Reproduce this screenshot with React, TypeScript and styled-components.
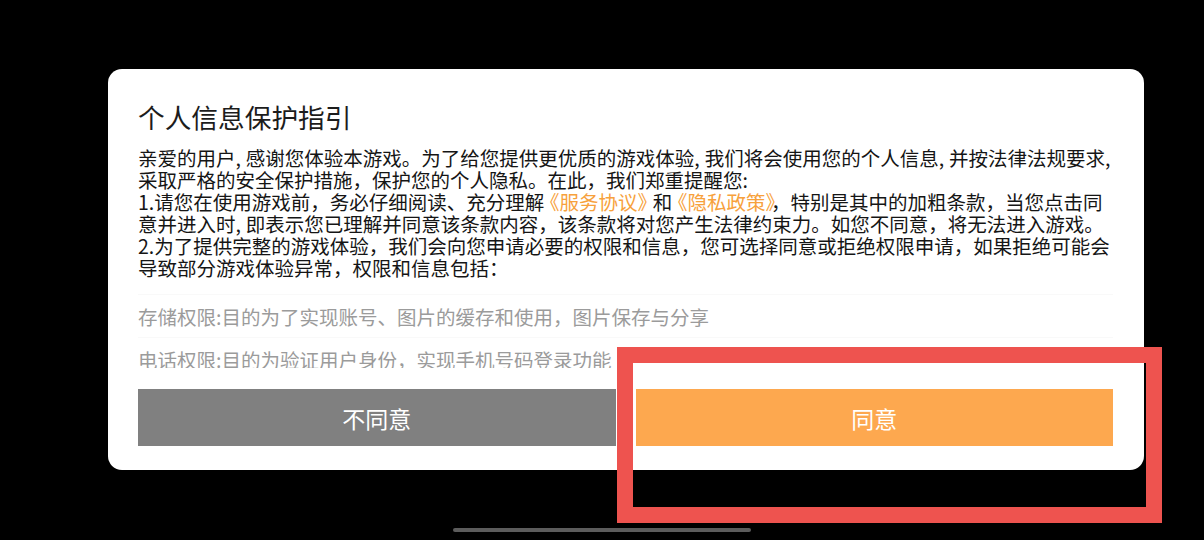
import React from 'react';
import styled, { createGlobalStyle } from 'styled-components';

const GlobalStyle = createGlobalStyle`
  html, body {
    margin: 0;
    padding: 0;
    background: #000;
  }
  body {
    font-family: "Noto Sans CJK SC", "Noto Sans", sans-serif;
  }
`;

const Screen = styled.div`
  position: relative;
  width: 1204px;
  height: 540px;
  background: #000;
  overflow: hidden;
  padding: 69px 0 0 108px;
  box-sizing: border-box;
`;

const Dialog = styled.div`
  width: 1036px;
  height: 401px;
  box-sizing: border-box;
  background: #fff;
  border-radius: 14px;
  padding: 31px 31px 24px 30px;
  display: flex;
  flex-direction: column;
`;

const Title = styled.h1`
  margin: 0;
  font-size: 26.7px;
  line-height: 34px;
  font-weight: 400;
  color: #1c1c1c;
`;

const Scroller = styled.div`
  margin-top: 13px;
  height: 221px;
  overflow: hidden;
`;

const Body = styled.div`
  font-size: 19.5px;
  line-height: 22px;
  color: #151515;
`;

const Line = styled.div`
  white-space: nowrap;
`;

const Link = styled.span`
  color: #f7a13c;
`;

// book-title brackets sit tighter than a full em in the source
const Bracket = styled.span<{ $side: 'l' | 'r' }>`
  margin-left: ${(p) => (p.$side === 'l' ? '-0.22em' : '0')};
  margin-right: ${(p) => (p.$side === 'r' ? '-0.22em' : '0')};
`;

// the half-width commas in the source carry a wide gap after them
const Comma = styled.span`
  margin-right: 0.25em;
`;

const PermissionList = styled.ul`
  list-style: none;
  margin: 15px 0 0;
  padding: 0;
`;

const PermissionItem = styled.li`
  height: 42px;
  display: flex;
  align-items: center;
  font-size: 19.5px;
  color: #9b9b9b;
  white-space: nowrap;
  border-top: 1px solid #f9f9f9;
`;

const Actions = styled.div`
  margin-top: 21px;
  display: flex;
  gap: 20px;
`;

const ActionButton = styled.button<{ $primary?: boolean }>`
  flex: 1;
  height: 57px;
  border: none;
  border-radius: 0;
  padding: 0;
  background: ${(p) => (p.$primary ? '#fda84f' : '#808080')};
  color: #fff;
  font-family: inherit;
  font-size: 23px;
  cursor: pointer;
`;

const Highlight = styled.div`
  position: absolute;
  left: 617px;
  top: 347px;
  width: 545px;
  height: 176px;
  box-sizing: border-box;
  border: 16px solid #ee534f;
  pointer-events: none;
`;

const HomeIndicator = styled.div`
  position: absolute;
  left: 453px;
  bottom: 8px;
  width: 298px;
  height: 4px;
  border-radius: 2px;
  background: #5c5c5c;
`;

const Book = ({ children }: { children: React.ReactNode }) => (
  <Link>
    <Bracket $side="l">《</Bracket>
    {children}
    <Bracket $side="r">》</Bracket>
  </Link>
);

const C = () => <Comma>,</Comma>;

const permissions = [
  '存储权限:目的为了实现账号、图片的缓存和使用，图片保存与分享',
  '电话权限:目的为验证用户身份，实现手机号码登录功能',
];

export default function App() {
  return (
    <>
      <GlobalStyle />
      <Screen>
        <Dialog>
          <Title>个人信息保护指引</Title>
          <Scroller>
            <Body>
              <Line>
                亲爱的用户<C />感谢您体验本游戏。为了给您提供更优质的游戏体验<C />我们将会使用您的个人信息<C />并按法律法规要求<C />
              </Line>
              <Line>采取严格的安全保护措施，保护您的个人隐私。在此，我们郑重提醒您:</Line>
              <Line>
                1.请您在使用游戏前，务必仔细阅读、充分理解<Book>服务协议</Book>和<Book>隐私政策</Book>，特别是其中的加粗条款，当您点击同
              </Line>
              <Line>
                意并进入时<C />即表示您已理解并同意该条款内容，该条款将对您产生法律约束力。如您不同意，将无法进入游戏。
              </Line>
              <Line>2.为了提供完整的游戏体验，我们会向您申请必要的权限和信息，您可选择同意或拒绝权限申请，如果拒绝可能会</Line>
              <Line>导致部分游戏体验异常，权限和信息包括：</Line>
            </Body>
            <PermissionList>
              {permissions.map((p) => (
                <PermissionItem key={p}>{p}</PermissionItem>
              ))}
            </PermissionList>
          </Scroller>
          <Actions>
            <ActionButton>不同意</ActionButton>
            <ActionButton $primary>同意</ActionButton>
          </Actions>
        </Dialog>
        <Highlight />
        <HomeIndicator />
      </Screen>
    </>
  );
}
